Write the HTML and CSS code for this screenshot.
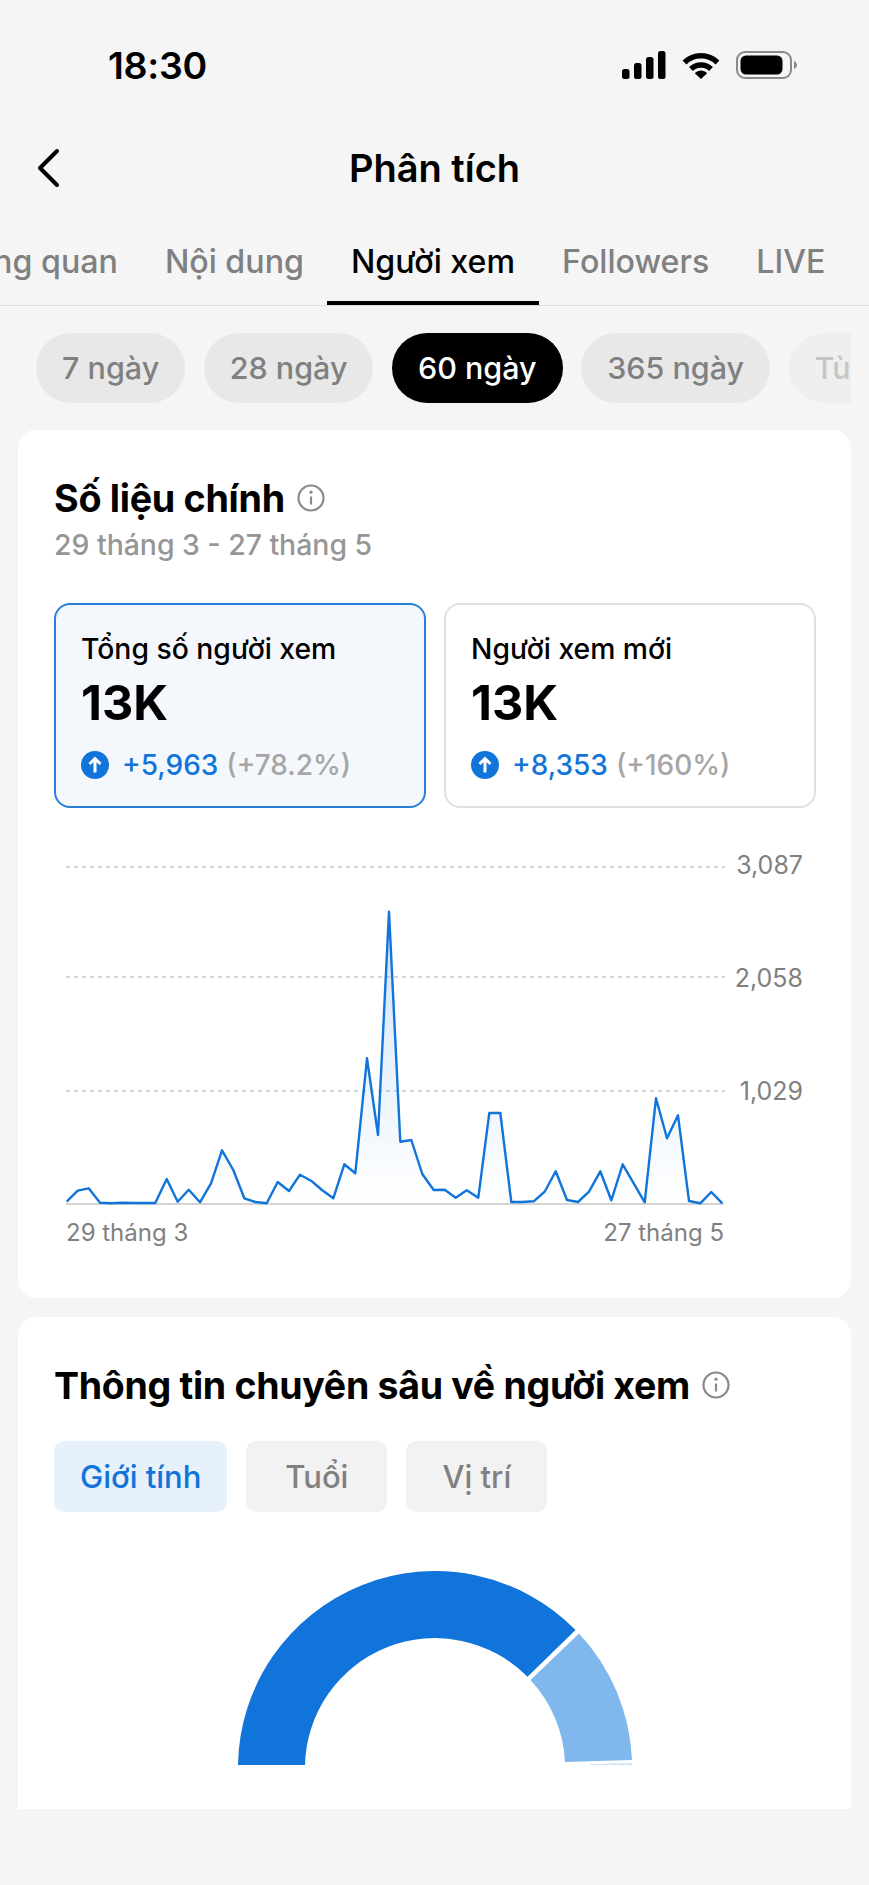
FILE: index.html
```html
<!DOCTYPE html>
<html lang="vi">
  <head>
    <meta charset="UTF-8" />
    <meta name="viewport" content="width=device-width, initial-scale=1.0" />
    <title>Phân tích</title>
    <link rel="stylesheet" href="styles.css">
  </head>
  <body>
    <div class="status">
      <span class="time">18:30</span>
      <div class="status-icons">
        <svg width="44" height="28" viewBox="0 0 44 28">
          <rect x="0" y="18" width="7.5" height="10" rx="2.5" />
          <rect x="12" y="12" width="7.5" height="16" rx="2.5" />
          <rect x="24" y="6" width="7.5" height="22" rx="2.5" />
          <rect x="36" y="0" width="7.5" height="28" rx="2.5" />
        </svg>
        <svg width="38" height="27" viewBox="0 0 38 27">
          <path class="wifi" d="M2.5 10.5C11.5 1.5 26.5 1.5 35.5 10.5" />
          <path class="wifi" d="M9 17C14.5 11.5 23.5 11.5 29 17" />
          <path d="M12.8 21.2C16.5 17.6 21.5 17.6 25.2 21.2L19 27Z" />
        </svg>
        <svg width="62" height="28" viewBox="0 0 62 28">
          <rect class="batt-edge" x="1" y="1" width="54" height="26" rx="8" />
          <rect x="4.5" y="4.5" width="42" height="19" rx="5.5" />
          <path class="batt-nub" d="M58 10C60 11 61 12.5 61 14C61 15.5 60 17 58 18Z" />
        </svg>
      </div>
    </div>

    <header class="topbar">
      <svg class="back" width="26" height="40" viewBox="0 0 26 40">
        <path d="M22 3L5 20L22 37" />
      </svg>
      <h1>Phân tích</h1>
    </header>

    <nav class="tabs">
      <a class="tab">Tổng quan</a>
      <a class="tab">Nội dung</a>
      <a class="tab active">Người xem</a>
      <a class="tab">Followers</a>
      <a class="tab">LIVE</a>
    </nav>

    <div class="pills">
      <span class="pill">7 ngày</span>
      <span class="pill">28 ngày</span>
      <span class="pill on">60 ngày</span>
      <span class="pill">365 ngày</span>
      <span class="pill faded">Tùy chỉnh</span>
    </div>

    <section class="card main-card">
      <div class="card-title">
        <h2>Số liệu chính</h2>
        <svg class="info" width="28" height="28" viewBox="0 0 28 28">
          <circle cx="14" cy="14" r="12.5" />
          <path d="M14 12.5V20.5" />
          <circle class="dot" cx="14" cy="8.2" r="1.6" />
        </svg>
      </div>
      <p class="range">29 tháng 3 - 27 tháng 5</p>

      <div class="metrics">
        <div class="metric selected">
          <p class="metric-label">Tổng số người xem</p>
          <p class="metric-value">13K</p>
          <p class="metric-change">
            <svg class="up" width="28" height="28" viewBox="0 0 28 28">
              <circle cx="14" cy="14" r="14" />
              <path d="M14 21.5V8M8.5 13L14 7.5L19.5 13" />
            </svg>
            <span class="delta">+5,963</span>
            <span class="pct">(+78.2%)</span>
          </p>
        </div>
        <div class="metric">
          <p class="metric-label">Người xem mới</p>
          <p class="metric-value">13K</p>
          <p class="metric-change">
            <svg class="up" width="28" height="28" viewBox="0 0 28 28">
              <circle cx="14" cy="14" r="14" />
              <path d="M14 21.5V8M8.5 13L14 7.5L19.5 13" />
            </svg>
            <span class="delta">+8,353</span>
            <span class="pct">(+160%)</span>
          </p>
        </div>
      </div>

      <svg class="chart" width="761" height="400" viewBox="54 850 761 400">
        <defs>
          <linearGradient id="area" x1="0" y1="0" x2="0" y2="1">
            <stop offset="0" stop-color="#1174da" stop-opacity="0.2" />
            <stop offset="1" stop-color="#1174da" stop-opacity="0" />
          </linearGradient>
        </defs>
        <path class="grid" d="M66 867H725M66 977H725M66 1091H725" />
        <text class="axis value" x="803" y="874" text-anchor="end">3,087</text>
        <text class="axis value" x="803" y="987" text-anchor="end">2,058</text>
        <text class="axis value" x="803" y="1100" text-anchor="end">1,029</text>
        <polygon class="fill" points="66.7,1203 66.7,1201.7 77.7,1190.7 88.7,1188.3 100,1202.7 111,1203.3 122,1202.7 133.3,1203 144.3,1203 155.3,1203 166.7,1179 177.7,1201.7 188.7,1189.7 200,1202.3 211,1183.3 222,1150.3 233.3,1170 244.3,1198.3 255.3,1202 266.7,1203.3 277.7,1182 289,1191 300,1174.7 311,1180.7 322,1190 333.3,1198.3 344.3,1164.3 355.3,1173.3 367,1058.3 378,1135 389,911.7 400.3,1141.7 411.3,1140 422.3,1174 433.7,1190 444.7,1189.7 455.7,1197.7 466.7,1190.3 478.3,1197.7 489.3,1113 500.3,1113 511.3,1202 522.3,1202 533.7,1201.3 544.7,1191.7 555.7,1171.3 567,1200 578,1202 589,1191.7 600.3,1171.3 611.3,1200.3 622.7,1164.3 633.7,1183.3 644.7,1202.3 656,1098.3 667,1138.3 678,1115.3 689,1201 700.3,1203.3 711.3,1192 722.3,1203.3" />
        <path class="base" d="M66 1204H724" />
        <polyline class="line" points="66.7,1201.7 77.7,1190.7 88.7,1188.3 100,1202.7 111,1203.3 122,1202.7 133.3,1203 144.3,1203 155.3,1203 166.7,1179 177.7,1201.7 188.7,1189.7 200,1202.3 211,1183.3 222,1150.3 233.3,1170 244.3,1198.3 255.3,1202 266.7,1203.3 277.7,1182 289,1191 300,1174.7 311,1180.7 322,1190 333.3,1198.3 344.3,1164.3 355.3,1173.3 367,1058.3 378,1135 389,911.7 400.3,1141.7 411.3,1140 422.3,1174 433.7,1190 444.7,1189.7 455.7,1197.7 466.7,1190.3 478.3,1197.7 489.3,1113 500.3,1113 511.3,1202 522.3,1202 533.7,1201.3 544.7,1191.7 555.7,1171.3 567,1200 578,1202 589,1191.7 600.3,1171.3 611.3,1200.3 622.7,1164.3 633.7,1183.3 644.7,1202.3 656,1098.3 667,1138.3 678,1115.3 689,1201 700.3,1203.3 711.3,1192 722.3,1203.3" />
        <text class="axis" x="66" y="1241">29 tháng 3</text>
        <text class="axis" x="724" y="1241" text-anchor="end">27 tháng 5</text>
      </svg>
    </section>

    <section class="card insight-card">
      <div class="card-title">
        <h2 class="wide">Thông tin chuyên sâu về người xem</h2>
        <svg class="info" width="28" height="28" viewBox="0 0 28 28">
          <circle cx="14" cy="14" r="12.5" />
          <path d="M14 12.5V20.5" />
          <circle class="dot" cx="14" cy="8.2" r="1.6" />
        </svg>
      </div>
      <div class="segments">
        <span class="segment on">Giới tính</span>
        <span class="segment">Tuổi</span>
        <span class="segment">Vị trí</span>
      </div>
      <svg class="donut" width="396" height="205" viewBox="237 1565 396 205">
        <path fill="#1174da" d="M238 1765A197 197 0 0 1 575.5 1630L527.5 1676.8A130 130 0 0 0 305 1765Z" />
        <path fill="#80b8ed" d="M579 1633.5A197 197 0 0 1 632 1760L565 1762A130 130 0 0 0 530.5 1680Z" />
        <path fill="#d3e6f8" d="M590 1764L632 1763V1765H590Z" />
      </svg>
    </section>
  </body>
</html>
```

FILE: styles.css
```css
* {
  box-sizing: border-box;
}

body {
  margin: 0;
  height: 1885px;
  overflow: hidden;
  background-color: #f5f5f5;
  color: #000;
  font-family: Inter, "Liberation Sans", sans-serif;
}

h1,
h2,
p {
  margin: 0;
}

.status {
  display: flex;
  justify-content: space-between;
  align-items: center;
  height: 138px;
  padding: 0 71px 8px 108px;
}

.time {
  font-size: 37.5px;
  font-weight: 600;
  letter-spacing: -0.3px;
}

.status-icons {
  display: flex;
  align-items: center;
  gap: 16px;
}

.wifi {
  fill: none;
  stroke: #000;
  stroke-width: 5.5;
}

.batt-edge {
  fill: none;
  stroke: #8a8a8a;
  stroke-width: 2;
}

.batt-nub {
  fill: #8a8a8a;
}

.topbar {
  position: relative;
  display: flex;
  justify-content: center;
  align-items: center;
  height: 60px;
}

.topbar h1 {
  font-size: 38px;
  font-weight: 600;
}

.back {
  position: absolute;
  left: 35px;
  top: 10px;
}

.back path {
  fill: none;
  stroke: #000;
  stroke-width: 4;
  stroke-linecap: round;
  stroke-linejoin: round;
}

.tabs {
  display: flex;
  justify-content: flex-end;
  height: 108px;
  padding-right: 20px;
  border-bottom: 1px solid #dedede;
  overflow: hidden;
  white-space: nowrap;
}

.tab {
  flex-shrink: 0;
  padding: 44px 23.5px 0;
  font-size: 32.2px;
  line-height: 40px;
  font-weight: 500;
  color: #808080;
}

.tab.active {
  color: #000;
  border-bottom: 4px solid #000;
}

.pills {
  display: flex;
  gap: 18.5px;
  width: 851px;
  margin-top: 27px;
  padding-left: 36px;
  overflow: hidden;
  white-space: nowrap;
}

.pill {
  flex-shrink: 0;
  height: 70px;
  padding: 0 26px;
  border-radius: 35px;
  background-color: #e8e8e8;
  color: #808080;
  font-size: 30.5px;
  font-weight: 500;
  line-height: 70px;
}

.pill.on {
  background-color: #000;
  color: #fff;
}

.pill.faded {
  opacity: 0.4;
}

.card {
  margin: 0 18px;
  padding: 46px 35px 0 36px;
  background-color: #fff;
  border-radius: 18px;
}

.main-card {
  margin-top: 27px;
  height: 868px;
}

.insight-card {
  margin-top: 19px;
  height: 492px;
  border-radius: 18px 18px 0 0;
}

.card-title {
  display: flex;
  align-items: center;
  gap: 12px;
  height: 44px;
}

.card-title h2 {
  font-size: 37.7px;
  font-weight: 700;
  letter-spacing: -0.3px;
  white-space: nowrap;
}

.card-title h2.wide {
  font-size: 37.5px;
}

.info {
  flex-shrink: 0;
}

.info circle,
.info path {
  fill: none;
  stroke: #8a8a8a;
  stroke-width: 2.2;
}

.info .dot {
  fill: #8a8a8a;
  stroke: none;
}

.range {
  margin-top: 7px;
  font-size: 28.4px;
  line-height: 36px;
  font-weight: 500;
  color: #969696;
}

.metrics {
  display: grid;
  grid-template-columns: 1fr 1fr;
  gap: 18px;
  margin-top: 40px;
}

.metric {
  height: 205px;
  padding: 26px 25px 0;
  border: 2px solid #e0e0e0;
  border-radius: 16px;
}

.metric.selected {
  background-color: #f4f8fd;
  border-color: #2a7fdb;
}

.metric-label {
  font-size: 28.3px;
  line-height: 36px;
  font-weight: 500;
}

.metric-value {
  margin-top: 6px;
  font-size: 48.5px;
  line-height: 60px;
  font-weight: 700;
}

.metric-change {
  display: flex;
  align-items: center;
  margin-top: 14px;
  font-size: 28px;
  line-height: 36px;
  font-weight: 500;
}

.up {
  flex-shrink: 0;
  margin-right: 13px;
}

.up circle {
  fill: #1174da;
}

.up path {
  fill: none;
  stroke: #fff;
  stroke-width: 3;
}

.delta {
  color: #1174da;
  margin-right: 8px;
}

.pct {
  color: #a6a6a6;
}

.chart {
  display: block;
  margin-top: 42px;
}

.grid {
  fill: none;
  stroke: #c8c8c8;
  stroke-width: 1.5;
  stroke-dasharray: 4 4;
}

.base {
  fill: none;
  stroke: #d4d4d4;
  stroke-width: 2;
}

.fill {
  fill: url(#area);
}

.line {
  fill: none;
  stroke: #1174da;
  stroke-width: 2.4;
  stroke-linejoin: round;
}

.axis {
  fill: #808080;
  font-size: 24px;
}

.axis.value {
  font-size: 25px;
}

.segments {
  display: flex;
  gap: 19px;
  margin-top: 34px;
}

.segment {
  height: 71px;
  min-width: 141px;
  padding: 0 26px;
  border-radius: 10px;
  background-color: #f2f2f2;
  color: #808080;
  font-size: 31px;
  font-weight: 500;
  line-height: 71px;
  text-align: center;
  white-space: nowrap;
}

.segment.on {
  background-color: #e6f1fc;
  color: #1174da;
}

.donut {
  display: block;
  margin: 53px auto 0;
}
```
